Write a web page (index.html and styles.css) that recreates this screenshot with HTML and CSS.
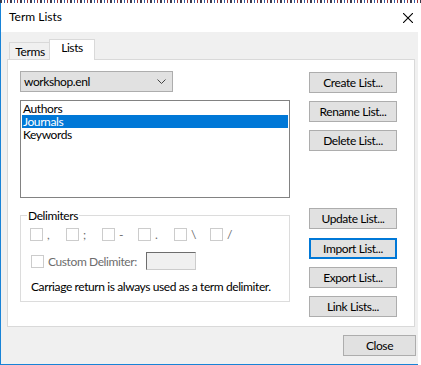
FILE: index.html
```html
<!DOCTYPE html>
<html lang="en">
<head>
    <meta charset="UTF-8">
    <title>Term Lists</title>
    <link rel="stylesheet" href="styles.css">
</head>
<body>
    <div class="strip"></div>
    <div class="window">
        <div class="titlebar">
            <span class="title">Term Lists</span>
            <svg class="close-x" width="10" height="10" viewBox="0 0 10 10">
                <path d="M0 0 L10 10 M10 0 L0 10" stroke="#000" stroke-width="1.1" fill="none"/>
            </svg>
        </div>

        <div class="client">
            <div class="tabs">
                <div class="tab">Terms</div>
                <div class="tab active">Lists</div>
            </div>

            <div class="panel">
                <div class="left">
                    <div class="combo">
                        <span>workshop.enl</span>
                        <svg width="9" height="5" viewBox="0 0 9 5">
                            <path d="M0.5 0.5 L4.5 4.5 L8.5 0.5" stroke="#444" stroke-width="1" fill="none"/>
                        </svg>
                    </div>

                    <div class="listbox">
                        <div class="item">Authors</div>
                        <div class="item selected">Journals</div>
                        <div class="item">Keywords</div>
                    </div>

                    <fieldset class="group">
                        <legend>Delimiters</legend>
                        <div class="delims">
                            <div class="check"><span class="box"></span>,</div>
                            <div class="check"><span class="box"></span>;</div>
                            <div class="check"><span class="box"></span>-</div>
                            <div class="check"><span class="box"></span>.</div>
                            <div class="check"><span class="box"></span>\</div>
                            <div class="check"><span class="box"></span>/</div>
                        </div>
                        <div class="custom">
                            <div class="check"><span class="box"></span>Custom Delimiter:</div>
                            <div class="textbox"></div>
                        </div>
                        <div class="note">Carriage return is always used as a term delimiter.</div>
                    </fieldset>
                </div>

                <div class="right">
                    <button class="btn">Create List...</button>
                    <button class="btn">Rename List...</button>
                    <button class="btn">Delete List...</button>
                    <button class="btn spaced">Update List...</button>
                    <button class="btn focused">Import List...</button>
                    <button class="btn">Export List...</button>
                    <button class="btn">Link Lists...</button>
                </div>
            </div>

            <div class="footer">
                <button class="btn close">Close</button>
            </div>
        </div>
    </div>
</body>
</html>
```

FILE: styles.css
```css
body {
    margin: 0;
    width: 421px;
    height: 365px;
    overflow: hidden;
    background: #ffffff;
    font-family: 'Lato', 'Liberation Sans', sans-serif;
    font-size: 12px;
    letter-spacing: -0.4px;
    color: #000;
    white-space: nowrap;
}

.strip {
    height: 3px;
    background: repeating-linear-gradient(90deg, #3a3a4a 0 2px, #ffffff 2px 4px, #2d5fb0 4px 5px, #ffffff 5px 7px, #a03030 7px 8px, #ffffff 8px 10px);
}

.window {
    width: 417px;
    height: 361px;
    border-left: 1px solid #1883d7;
    border-bottom: 1px solid #1883d7;
    display: flex;
    flex-direction: column;
}

.titlebar {
    height: 29px;
    background: #fff;
    display: flex;
    align-items: center;
    justify-content: space-between;
    padding: 0 5px 0 8px;
}

.title {
    font-size: 12px;
    letter-spacing: 0;
    margin-top: -2px;
}

.client {
    flex: 1;
    background: #f0f0f0;
    padding: 7px 0 0 6px;
}

.tabs {
    display: flex;
    align-items: flex-end;
    margin-left: 2px;
    height: 20px;
}

.tab {
    height: 17px;
    width: 40px;
    box-sizing: border-box;
    border: 1px solid #d9d9d9;
    border-bottom: none;
    border-right: none;
    background: #f0f0f0;
    text-align: center;
    line-height: 18px;
    padding-left: 1px;
}

.tab.active {
    height: 21px;
    width: 46px;
    margin-bottom: -1px;
    border-right: 1px solid #d9d9d9;
    background: #fff;
    position: relative;
    z-index: 1;
    line-height: 16px;
    padding-left: 0;
}

.panel {
    width: 408px;
    height: 268px;
    box-sizing: border-box;
    border: 1px solid #d9d9d9;
    background: #fff;
    padding: 11px 16px 0 12px;
    display: grid;
    grid-template-columns: 270px 88px;
    column-gap: 19px;
    align-items: start;
}

.combo {
    width: 153px;
    height: 21px;
    box-sizing: border-box;
    border: 1px solid #adadad;
    background: #e1e1e1;
    display: flex;
    align-items: center;
    justify-content: space-between;
    padding: 0 6px 0 3px;
}

.listbox {
    margin-top: 8px;
    height: 98px;
    box-sizing: border-box;
    border: 1px solid #828282;
    padding: 1px 1px;
}

.item {
    height: 13px;
    line-height: 13px;
    padding-left: 1px;
}

.item.selected {
    background: #0078d7;
    color: #fff;
}

.group {
    margin: 10px 0 0 0;
    padding: 0;
    height: 94px;
    box-sizing: border-box;
    border: 1px solid #dcdcdc;
    min-inline-size: 0;
}

.group legend {
    margin-left: 6px;
    padding: 0 1px;
    line-height: 15px;
}

.delims {
    display: flex;
    padding: 5px 0 0 9px;
}

.check {
    display: flex;
    align-items: center;
    width: 36px;
    height: 13px;
    color: #6d6d6d;
}

.box {
    width: 13px;
    height: 13px;
    box-sizing: border-box;
    border: 1px solid #cccccc;
    background: #fff;
    margin-right: 4px;
    flex: none;
}

.custom {
    display: flex;
    align-items: center;
    padding: 11px 0 0 10px;
}

.custom .check {
    width: 115px;
}

.textbox {
    width: 50px;
    height: 18px;
    box-sizing: border-box;
    border: 1px solid #cccccc;
    border-top-color: #6d6d6d;
    border-left-color: #6d6d6d;
    background: #f0f0f0;
}

.note {
    padding: 9px 0 0 10px;
}

.right {
    display: flex;
    flex-direction: column;
}

.btn {
    height: 21px;
    box-sizing: border-box;
    border: 1px solid #adadad;
    background: #e1e1e1;
    font-family: inherit;
    font-size: 12px;
    letter-spacing: -0.4px;
    color: #000;
    padding: 0;
    margin-top: 8px;
}

.right .btn:first-child {
    margin-top: 1px;
}

.btn.spaced {
    margin-top: 57px;
}

.btn.focused {
    border: 2px solid #0078d7;
    margin-top: 9px;
}

.footer {
    display: flex;
    justify-content: flex-end;
    padding-right: 2px;
}

.btn.close {
    width: 73px;
    margin-top: 8px;
}
```
